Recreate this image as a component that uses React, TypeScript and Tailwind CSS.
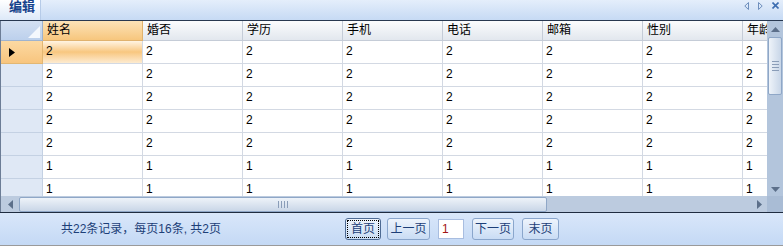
import React from "react";

const columns = ["姓名", "婚否", "学历", "手机", "电话", "邮箱", "性别", "年龄"];
const rows = ["2", "2", "2", "2", "2", "1", "1"];

function Triangle({ className }: { className?: string }) {
  return (
    <svg width="6" height="9" viewBox="0 0 6 9" className={className}>
      <path d="M0 0 L6 4.5 L0 9 Z" fill="currentColor" />
    </svg>
  );
}

function PagerButton({ label, width, focused }: { label: string; width: string; focused?: boolean }) {
  return (
    <button
      className={`${width} h-[22px] p-[2px] rounded-[3px] border bg-linear-to-b from-[#eef4fc] to-[#c9dcf4] text-[12px] text-[#1d3f78] leading-none flex items-stretch justify-center ${
        focused ? "border-[#4d6a93]" : "border-[#8aa6cc]"
      }`}
    >
      <span
        className={`flex-1 flex items-center justify-center ${focused ? "outline outline-1 outline-dotted outline-black" : ""}`}
      >
        {label}
      </span>
    </button>
  );
}

export default function App() {
  return (
    <div className="w-[783px] h-[247px] overflow-hidden bg-white font-['Liberation_Sans','Noto_Sans_CJK_SC',sans-serif] text-[12px] select-none">
      {/* title strip */}
      <div className="h-[20px] flex items-stretch justify-between bg-linear-to-b from-[#e4eefb] to-[#c6daf4]">
        <div className="w-[41px] border-r border-[#b6cbe8] bg-linear-to-b from-[#ffffff] to-[#dde9f8] flex items-start pl-[9px]">
          <span className="font-bold text-[13px] leading-[14px] text-[#15428b]">编辑</span>
        </div>
        <div className="flex items-start gap-[9px] pr-[4px] pt-[2px] text-[#6f8fbd]">
          <svg width="5" height="8" viewBox="0 0 5 8">
            <path d="M4.5 0.5 L0.8 4 L4.5 7.5 Z" fill="none" stroke="currentColor" strokeWidth="1" />
          </svg>
          <svg width="5" height="8" viewBox="0 0 5 8">
            <path d="M0.5 0.5 L4.2 4 L0.5 7.5 Z" fill="none" stroke="currentColor" strokeWidth="1" />
          </svg>
          <svg width="7" height="7" viewBox="0 0 7 7" className="text-[#3d6db0]">
            <path d="M0.5 0.5 L6.5 6.5 M6.5 0.5 L0.5 6.5" stroke="currentColor" strokeWidth="1.6" />
          </svg>
        </div>
      </div>

      {/* grid */}
      <div className="border-t border-[#283850] flex h-[176px]">
        <div className="w-[767px] overflow-hidden border-l border-[#6c7d96]">
          <div className="flex h-[20px] w-max">
            <div className="w-[42px] h-[20px] border-r border-b border-[#9eb3cf] bg-linear-to-b from-[#d3e0f2] to-[#bcd0ec] flex items-end justify-end p-[2px]">
              <svg width="12" height="12" viewBox="0 0 12 12">
                <path d="M12 0 L12 12 L0 12 Z" fill="#f4f8fd" />
              </svg>
            </div>
            {columns.map((c, i) => (
              <div
                key={c}
                className={`w-[100px] shrink-0 h-[20px] border-r border-b pl-[4px] leading-[19px] text-[12px] text-black ${
                  i === 0
                    ? "bg-linear-to-b from-[#fce3b7] to-[#f7c67d] border-[#e0b26e]"
                    : "bg-linear-to-b from-[#fbfcfd] to-[#e2e7ee] border-[#c5ccd7]"
                }`}
              >
                {c}
              </div>
            ))}
          </div>
          {rows.map((v, r) => (
            <div key={r} className="flex h-[23px] w-max">
              <div
                className={`w-[42px] h-[23px] border-r border-b flex items-center pl-[8px] ${
                  r === 0
                    ? "bg-linear-to-b from-[#fcd9a2] to-[#f8c57e] border-[#e2b773] text-black"
                    : "bg-[#dfe8f5] border-[#c4d1e3]"
                }`}
              >
                {r === 0 && <Triangle />}
              </div>
              {columns.map((c, i) => (
                <div
                  key={c}
                  className={`w-[100px] shrink-0 h-[23px] border-r border-b border-[#d3d9e3] pl-[3px] pt-[2px] leading-[16px] text-[12px] text-black ${
                    r === 0 && i === 0 ? "bg-linear-to-b from-[#fff4e2] via-[#f8c77f] to-[#fdebd0]" : "bg-white"
                  }`}
                >
                  {v}
                </div>
              ))}
            </div>
          ))}
        </div>

        {/* vertical scrollbar */}
        <div className="w-[16px] h-[176px] bg-[#b3c5dc] flex flex-col">
          <div className="h-[16px] flex items-center justify-center">
            <svg width="9" height="5" viewBox="0 0 9 5">
              <path d="M0 5 L4.5 0 L9 5 Z" fill="#5c6f8a" />
            </svg>
          </div>
          <div className="mx-[1px] h-[58px] rounded-[2px] border border-[#8fa7c7] bg-linear-to-r from-[#eef3f9] to-[#c8d6e8] flex flex-col items-center justify-center gap-[2px]">
            <div className="w-[7px] h-px bg-[#8a9db8]" />
            <div className="w-[7px] h-px bg-[#8a9db8]" />
            <div className="w-[7px] h-px bg-[#8a9db8]" />
            <div className="w-[7px] h-px bg-[#8a9db8]" />
          </div>
          <div className="flex-1" />
          <div className="h-[16px] flex items-center justify-center">
            <svg width="9" height="5" viewBox="0 0 9 5">
              <path d="M0 0 L4.5 5 L9 0 Z" fill="#5c6f8a" />
            </svg>
          </div>
        </div>
      </div>

      {/* horizontal scrollbar */}
      <div className="flex h-[16px]">
        <div className="w-[767px] bg-[#bccbdf] flex items-center">
          <div className="w-[19px] h-[16px] flex items-center justify-center border-l border-[#6c7d96]">
            <svg width="5" height="9" viewBox="0 0 5 9">
              <path d="M5 0 L0 4.5 L5 9 Z" fill="#5c6f8a" />
            </svg>
          </div>
          <div className="w-[528px] h-[15px] rounded-[2px] border border-[#8fa7c7] bg-linear-to-b from-[#eef3f9] to-[#c9d6e7] flex items-center justify-center gap-[2px]">
            <div className="w-px h-[7px] bg-[#8a9db8]" />
            <div className="w-px h-[7px] bg-[#8a9db8]" />
            <div className="w-px h-[7px] bg-[#8a9db8]" />
            <div className="w-px h-[7px] bg-[#8a9db8]" />
          </div>
          <div className="flex-1" />
          <div className="w-[16px] h-[16px] flex items-center justify-center">
            <svg width="5" height="9" viewBox="0 0 5 9">
              <path d="M0 0 L5 4.5 L0 9 Z" fill="#5c6f8a" />
            </svg>
          </div>
        </div>
        <div className="w-[16px] bg-[#a9bcd5]" />
      </div>

      {/* pager */}
      <div className="h-[34px] border-t border-[#1f2c40] border-b border-b-[#9a9a9a] bg-linear-to-b from-[#d9e7fa] to-[#c4d9f5] flex items-center">
        <span className="ml-[61px] w-[284px] text-[12px] text-[#1d3f78]">共22条记录，每页16条, 共2页</span>
        <PagerButton label="首页" width="w-[36px]" focused />
        <div className="ml-[6px]">
          <PagerButton label="上一页" width="w-[43px]" />
        </div>
        <div className="ml-[8px] w-[26px] h-[20px] bg-white border border-[#a8bde0] text-[#a21515] text-[12px] leading-[18px] pl-[3px]">1</div>
        <div className="ml-[8px]">
          <PagerButton label="下一页" width="w-[42px]" />
        </div>
        <div className="ml-[8px]">
          <PagerButton label="末页" width="w-[37px]" />
        </div>
      </div>
    </div>
  );
}
